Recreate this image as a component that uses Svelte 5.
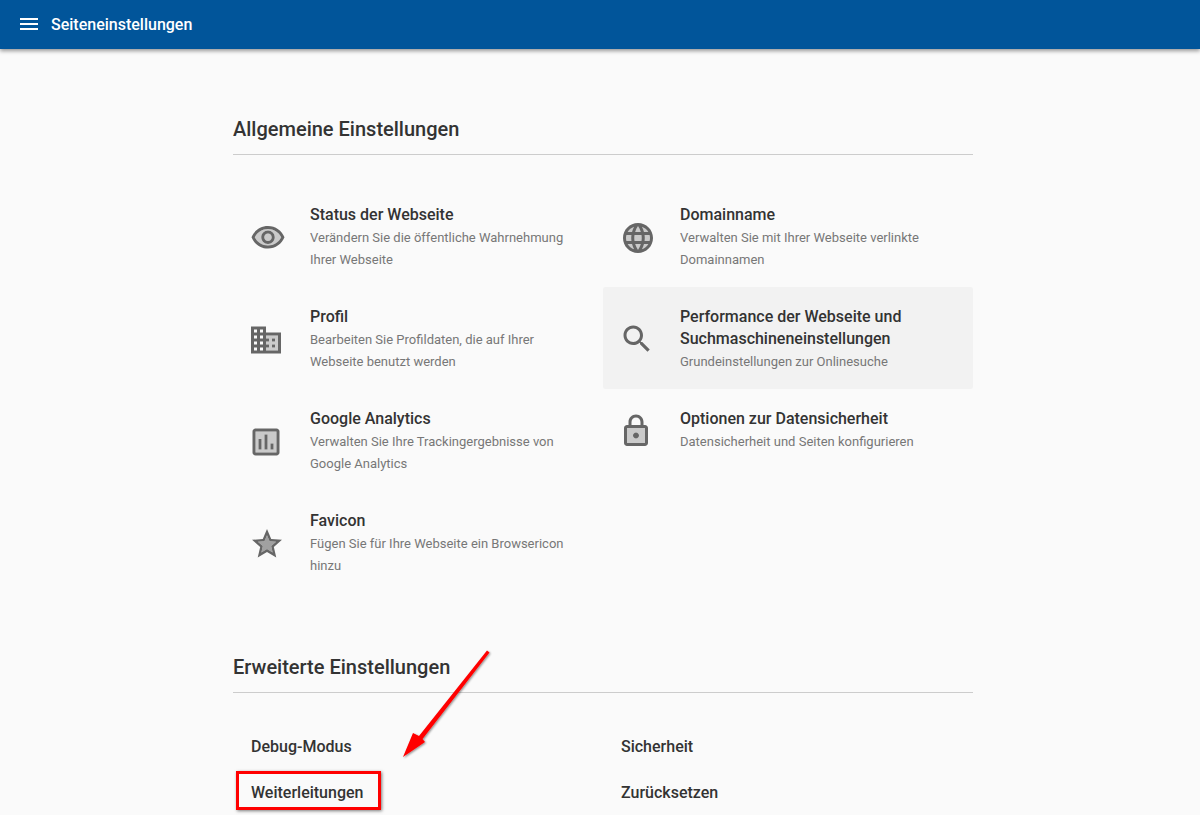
<script>
  const general = [
    { icon: 'eye', title: 'Status der Webseite', text: 'Verändern Sie die öffentliche Wahrnehmung Ihrer Webseite' },
    { icon: 'globe', title: 'Domainname', text: 'Verwalten Sie mit Ihrer Webseite verlinkte Domainnamen' },
    { icon: 'building', title: 'Profil', text: 'Bearbeiten Sie Profildaten, die auf Ihrer Webseite benutzt werden' },
    { icon: 'search', title: 'Performance der Webseite und Suchmaschineneinstellungen', text: 'Grundeinstellungen zur Onlinesuche', active: true },
    { icon: 'chart', title: 'Google Analytics', text: 'Verwalten Sie Ihre Trackingergebnisse von Google Analytics' },
    { icon: 'lock', title: 'Optionen zur Datensicherheit', text: 'Datensicherheit und Seiten konfigurieren' },
    { icon: 'star', title: 'Favicon', text: 'Fügen Sie für Ihre Webseite ein Browsericon hinzu' }
  ];

  const advanced = ['Debug-Modus', 'Sicherheit', 'Weiterleitungen', 'Zurücksetzen'];

  const icons = {
    eye: {
      light: 'M12 6c-3.79 0-7.17 2.13-8.82 5.5C4.83 14.87 8.21 17 12 17s7.17-2.13 8.82-5.5C19.17 8.13 15.79 6 12 6zm0 10c-2.48 0-4.5-2.02-4.5-4.5S9.52 7 12 7s4.5 2.02 4.5 4.5S14.48 16 12 16zm0-7a2.5 2.5 0 1 0 0 5 2.5 2.5 0 0 0 0-5z',
      solid: 'M12 4C7 4 2.73 7.11 1 11.5 2.73 15.89 7 19 12 19s9.27-3.11 11-7.5C21.27 7.11 17 4 12 4zm0 13c-3.79 0-7.17-2.13-8.82-5.5C4.83 8.13 8.21 6 12 6s7.17 2.13 8.82 5.5C19.17 14.87 15.79 17 12 17zm0-10c-2.48 0-4.5 2.02-4.5 4.5S9.52 16 12 16s4.5-2.02 4.5-4.5S14.48 7 12 7zm0 7c-1.38 0-2.5-1.12-2.5-2.5S10.62 9 12 9s2.5 1.12 2.5 2.5S13.38 14 12 14z'
    },
    globe: {
      light: 'M12 3a9 9 0 1 0 0 18 9 9 0 0 0 0-18z',
      solid: 'M11.99 2C6.47 2 2 6.48 2 12s4.47 10 9.99 10C17.52 22 22 17.52 22 12S17.52 2 11.99 2zm6.93 6h-2.95c-.32-1.25-.78-2.45-1.38-3.56 1.84.63 3.37 1.91 4.33 3.56zM12 4.04c.83 1.2 1.48 2.53 1.91 3.96h-3.82c.43-1.43 1.08-2.76 1.91-3.96zM4.26 14C4.1 13.36 4 12.69 4 12s.1-1.36.26-2h3.38c-.08.66-.14 1.32-.14 2 0 .68.06 1.34.14 2H4.26zm.82 2h2.95c.32 1.25.78 2.45 1.38 3.56-1.84-.63-3.37-1.9-4.33-3.56zm2.95-8H5.08c.96-1.66 2.49-2.93 4.33-3.56C8.81 5.55 8.35 6.75 8.03 8zM12 19.96c-.83-1.2-1.48-2.53-1.91-3.96h3.82c-.43 1.43-1.08 2.76-1.91 3.96zM14.34 14H9.66c-.09-.66-.16-1.32-.16-2 0-.68.07-1.35.16-2h4.68c.09.65.16 1.32.16 2 0 .68-.07 1.34-.16 2zm.25 5.56c.6-1.11 1.06-2.31 1.38-3.56h2.95c-.96 1.65-2.49 2.93-4.33 3.56zM16.36 14c.08-.66.14-1.32.14-2 0-.68-.06-1.34-.14-2h3.38c.16.64.26 1.31.26 2s-.1 1.36-.26 2h-3.38z'
    },
    building: {
      light: 'M12 11h2v2h-2v2h2v2h-2v2h8V9h-8v2zm4 0h2v2h-2v-2zm0 4h2v2h-2v-2z',
      solid: 'M12 7V3H2v18h20V7H12zM6 19H4v-2h2v2zm0-4H4v-2h2v2zm0-4H4V9h2v2zm0-4H4V5h2v2zm4 12H8v-2h2v2zm0-4H8v-2h2v2zm0-4H8V9h2v2zm0-4H8V5h2v2zm10 12h-8v-2h2v-2h-2v-2h2v-2h-2V9h8v10zm-2-8h-2v2h2v-2zm0 4h-2v2h2v-2z'
    },
    search: {
      light: '',
      solid: 'M15.5 14h-.79l-.28-.27C15.41 12.59 16 11.11 16 9.5 16 5.91 13.09 3 9.5 3S3 5.91 3 9.5 5.91 16 9.5 16c1.61 0 3.09-.59 4.23-1.57l.27.28v.79l5 4.99L20.49 19l-4.99-5zm-6 0C7.01 14 5 11.99 5 9.5S7.01 5 9.5 5 14 7.01 14 9.5 11.99 14 9.5 14z'
    },
    chart: {
      light: 'M5 5v14h14V5H5zm4 12H7v-7h2v7zm4 0h-2V7h2v10zm4 0h-2v-4h2v4z',
      solid: 'M7 10h2v7H7zm4-3h2v10h-2zm4 6h2v4h-2zM19 3H5c-1.1 0-2 .9-2 2v14c0 1.1.9 2 2 2h14c1.1 0 2-.9 2-2V5c0-1.1-.9-2-2-2zm0 16H5V5h14v14z'
    },
    lock: {
      light: 'M6 20h12V10H6v10zm6-7c1.1 0 2 .9 2 2s-.9 2-2 2-2-.9-2-2 .9-2 2-2z',
      solid: 'M18 8h-1V6c0-2.76-2.24-5-5-5S7 3.24 7 6v2H6c-1.1 0-2 .9-2 2v10c0 1.1.9 2 2 2h12c1.1 0 2-.9 2-2V10c0-1.1-.9-2-2-2zM9 6c0-1.66 1.34-3 3-3s3 1.34 3 3v2H9V6zm9 14H6V10h12v10zm-6-3c1.1 0 2-.9 2-2s-.9-2-2-2-2 .9-2 2 .9 2 2 2z'
    },
    star: {
      light: 'M12 15.4l-3.76 2.27 1-4.28-3.32-2.88 4.38-.38L12 6.1l1.71 4.04 4.38.38-3.32 2.88 1 4.28z',
      solid: 'M22 9.24l-7.19-.62L12 2 9.19 8.63 2 9.24l5.46 4.73L5.82 21 12 17.27 18.18 21l-1.63-7.03L22 9.24zM12 15.4l-3.76 2.27 1-4.28-3.32-2.88 4.38-.38L12 6.1l1.71 4.04 4.38.38-3.32 2.88 1 4.28L12 15.4z'
    }
  };
</script>

<header class="topbar">
  <svg class="menu" viewBox="0 0 24 24" width="24" height="24">
    <path d="M3 18h18v-2H3v2zm0-5h18v-2H3v2zm0-7v2h18V6H3z" />
  </svg>
  <span class="page-title">Seiteneinstellungen</span>
</header>

<main class="content">
  <section class="general">
    <h2>Allgemeine Einstellungen</h2>
    <div class="grid">
      {#each general as item}
        <a class="item {item.icon}" class:active={item.active}>
          <svg class="icon" viewBox="0 0 24 24" width="36" height="36">
            {#if icons[item.icon].light}
              <path class="light" d={icons[item.icon].light} />
            {/if}
            <path d={icons[item.icon].solid} />
          </svg>
          <div class="body">
            <div class="title">{item.title}</div>
            <div class="text">{item.text}</div>
          </div>
        </a>
      {/each}
    </div>
  </section>

  <section class="advanced">
    <h2>Erweiterte Einstellungen</h2>
    <div class="links">
      {#each advanced as link}
        <a class="link">{link}</a>
      {/each}
    </div>
  </section>
</main>

<!-- screenshot annotation -->
<svg class="arrow" viewBox="0 0 100 120" width="100" height="120">
  <defs>
    <filter id="drop" x="-20%" y="-20%" width="140%" height="140%">
      <feDropShadow dx="1" dy="1" stdDeviation="1" flood-color="#000" flood-opacity="0.45" />
    </filter>
  </defs>
  <path d="M91.500 6.500 L89 4.500 L21 90 L15 87 L5 111 L27 96 L24.500 93 Z" fill="#f00" filter="url(#drop)" />
</svg>
<div class="redbox"></div>

<style>
  :global(body) {
    background: #fafafa;
    font-family: Roboto, sans-serif;
    overflow: hidden;
  }

  .topbar {
    display: flex;
    align-items: center;
    height: 49px;
    box-sizing: border-box;
    padding: 0 0 1px 17px;
    background: #01559a;
    box-shadow: 0 2px 4px rgba(0, 0, 0, 0.4);
    color: #fff;
  }

  .menu {
    fill: #fff;
    margin-right: 10px;
  }

  .page-title {
    font-size: 16px;
    font-weight: 500;
  }

  .content {
    width: 740px;
    margin-left: 233px;
    padding-top: 62px;
  }

  h2 {
    margin: 0;
    height: 43px;
    line-height: 36px;
    font-size: 20px;
    font-weight: 500;
    color: #333;
    border-bottom: 1px solid #ccc;
  }

  .grid {
    display: grid;
    grid-template-columns: 370px 370px;
    grid-auto-rows: 102px;
    margin-top: 30px;
  }

  .item {
    display: flex;
    align-items: center;
    align-self: start;
    gap: 24px;
    padding: 19px 30px 17px 17px;
    border-radius: 2px;
  }

  .item.active {
    background: #f2f2f2;
    padding-bottom: 16.5px;
  }

  .icon {
    flex: none;
    fill: #666;
  }

  .building .icon,
  .chart .icon,
  .lock .icon {
    transform: translateX(-2px);
  }

  .search .icon,
  .star .icon {
    transform: translateX(-1px);
  }

  .light {
    opacity: 0.32;
  }

  .star .light {
    opacity: 0.6;
  }

  .title {
    font-size: 16px;
    font-weight: 500;
    line-height: 22.5px;
    color: #333;
  }

  .active .title {
    line-height: 22px;
  }

  .text {
    margin-top: 0.5px;
    font-size: 13px;
    line-height: 22px;
    color: #777;
  }

  .advanced {
    margin-top: 56px;
  }

  .links {
    display: grid;
    grid-template-columns: 370px 370px;
    margin-top: 31px;
  }

  .link {
    height: 46px;
    padding-left: 18px;
    line-height: 46px;
    font-size: 16px;
    font-weight: 500;
    color: #333;
  }

  .arrow {
    position: absolute;
    left: 398px;
    top: 646px;
  }

  .redbox {
    position: absolute;
    left: 236px;
    top: 771px;
    width: 139px;
    height: 33px;
    border: 3px solid #f00;
    box-shadow: 1px 1px 3px rgba(0, 0, 0, 0.5);
  }
</style>
